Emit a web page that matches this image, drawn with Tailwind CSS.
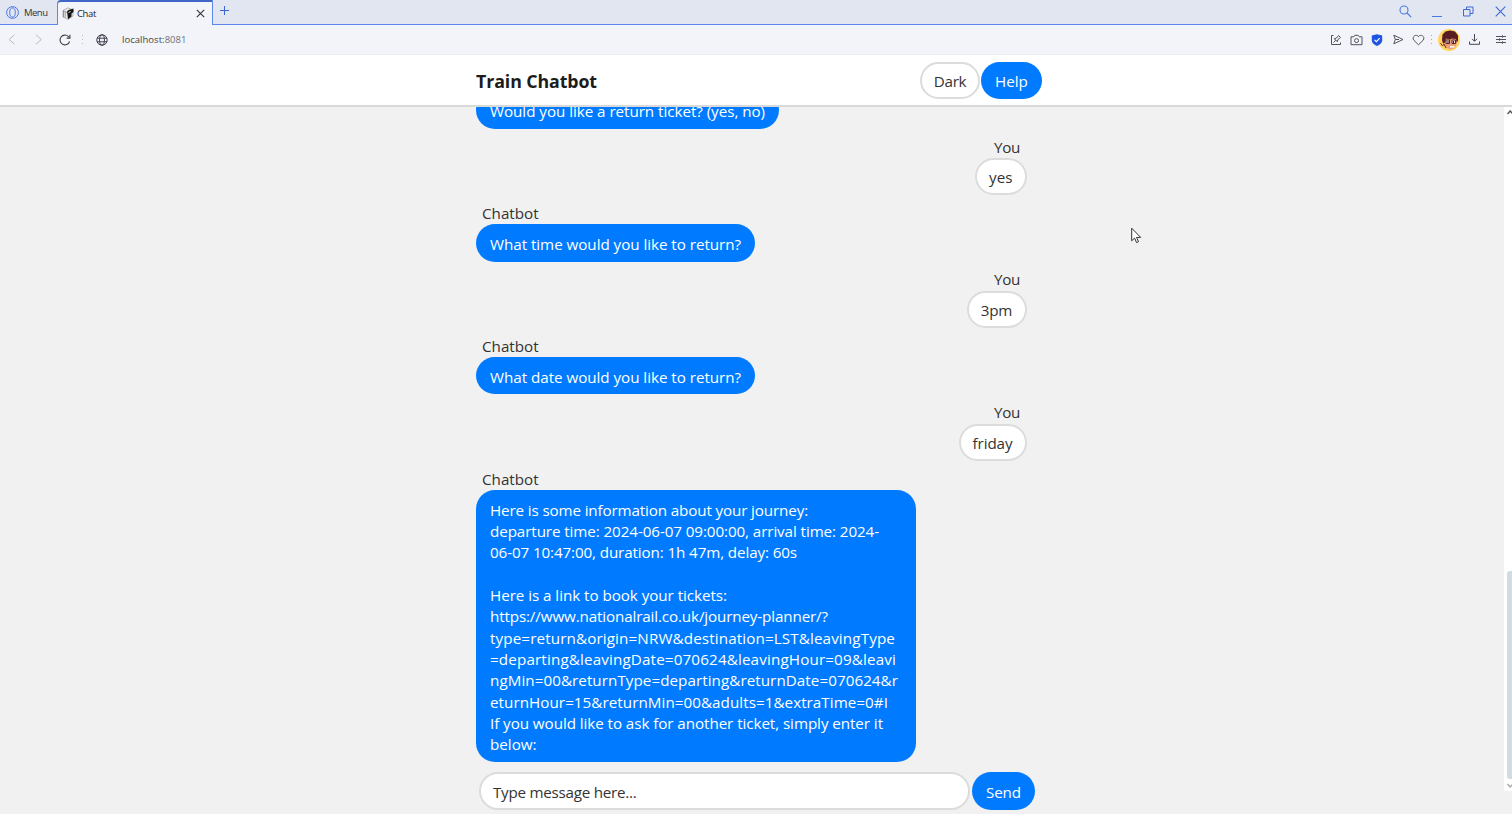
<!DOCTYPE html>
<html lang="en">
<head>
<meta charset="utf-8">
<title>Chat</title>
<script src="https://cdn.jsdelivr.net/npm/@tailwindcss/browser@4"></script>
</head>
<body class="w-[1512px] h-[814px] overflow-hidden bg-[#f1f1f1] font-['Open_Sans','Noto_Sans',sans-serif] text-[15.2px] leading-[21.33px] text-[#333]">
<div class="relative flex h-[814px] flex-col">
  <!-- Tab strip -->
  <div class="flex h-[25px] shrink-0 bg-[#e2e6f0] text-[9.5px] leading-none">
    <div class="flex w-[57px] items-center border-b border-[#5c86ee] pl-[6px] pt-px">
      <svg class="mr-[5px] h-[13px] w-[13px] shrink-0" viewBox="0 0 13 13" fill="none" stroke="#4a76e8"><circle cx="6.5" cy="6.5" r="5.9"/><ellipse cx="6.5" cy="6.5" rx="2.8" ry="4.6"/></svg>
      <span class="whitespace-nowrap pt-px tracking-[-0.508px]">Menu</span>
    </div>
    <div class="flex w-[156px] items-center rounded-tl-[4px] border-x border-t-2 border-x-[#5c86ee] border-t-[#3f66c8] bg-[#f3f4f9] pl-[4px]">
      <svg class="mr-[3px] h-[13px] w-[12px]" viewBox="0 0 12 13"><path d="M1 3.5 6 .8 11 3v6L6 12.3 1 10z" fill="#ececef" stroke="#999" stroke-width=".7"/><path d="M5 4.500 6.500 3 11.500 1.500V5L9.500 6.500V9.500L6 12.300 5.500 8z" fill="#151515"/><path d="M6.500 5.500 8.500 4.500" stroke="#eee"/><path d="M1.500 4v6M3.200 5v5.500M1 3.500l4 2" stroke="#777" stroke-width=".7"/></svg>
      <span class="whitespace-nowrap tracking-[-0.371px] text-[#222]">Chat</span>
      <svg class="ml-auto mr-[7px] h-[9px] w-[9px]" viewBox="0 0 9 9" stroke="#333" stroke-width="1.1"><path d="M.8.8l7.400 7.400M8.200.8.8 8.200"/></svg>
    </div>
    <div class="flex flex-1 border-b border-[#5c86ee] pl-[7px] pt-[6px]">
      <svg class="h-[9px] w-[9px]" viewBox="0 0 9 9" stroke="#3b64d0"><path d="M4.5 0v9M0 4.5h9"/></svg>
      <div class="ml-auto flex pr-[6px]">
        <svg class="-mt-[1px] mr-[20px] h-[13px] w-[13px] translate-x-px" viewBox="0 0 13 13" fill="none" stroke="#4a78e6" stroke-width="1.1"><circle cx="5" cy="5" r="4"/><path d="m8 8 4.200 4.200"/></svg>
        <svg class="mr-[22px] h-[12px] w-[10px] translate-x-px" viewBox="0 0 10 12" stroke="#4a78e6"><path d="M0 10.500h10"/></svg>
        <svg class="mr-[21px] h-[11px] w-[11px]" viewBox="0 0 11 11" fill="none" stroke="#3f68d4"><path d="M.5 3.500h6.500v6.500H.5zM3.500 3.500v-2.500h6.500v6.500H7"/></svg>
        <svg class="h-[11px] w-[11px]" viewBox="0 0 11 11" stroke="#3f68d4" stroke-width="1.1"><path d="m.7.7 9.600 9.600M10.300.7.7 10.300"/></svg>
      </div>
    </div>
  </div>
  <!-- Address bar -->
  <div class="flex h-[30px] shrink-0 items-center border-b border-[#eceef2] bg-[#f3f4f9] text-[9.5px] leading-none">
    <svg class="ml-[8px] h-[11px] w-[8px]" viewBox="0 0 8 11" fill="none" stroke="#b5b8c0"><path d="M6.500.8 1.200 5.500l5.300 4.700"/></svg>
    <svg class="ml-[19px] h-[11px] w-[8px]" viewBox="0 0 8 11" fill="none" stroke="#b5b8c0"><path d="m1 .8 5.300 4.700L1 10.200"/></svg>
    <svg class="ml-[16px] h-[12px] w-[12px]" viewBox="0 0 12 12" fill="none" stroke="#3c3e4c" stroke-width="1.1"><path d="M10.600 7.500A4.900 4.900 0 1 1 9.500 2.600l1 1"/><path d="M10.900.8v3.300H7.600"/></svg>
    <svg class="ml-[10px] h-[9px] w-[3px]" viewBox="0 0 3 9" fill="#b5b8c0"><path d="M1 0h1v1H1zM1 4h1v1H1zM1 8h1v1H1z"/></svg>
    <svg class="ml-[12px] h-[12px] w-[12px]" viewBox="0 0 12 12" fill="none" stroke="#3c3e4c"><circle cx="6" cy="6" r="5.200"/><ellipse cx="6" cy="6" rx="2.400" ry="5.200"/><path d="M1 4.200h10M1 7.800h10"/></svg>
    <span class="ml-[14px] whitespace-nowrap pt-px tracking-[0.033px] text-[#444]">localhost:<span class="text-[#6d6f78]">8081</span></span>
    <div class="ml-auto flex items-center pr-[6px]">
      <div class="flex translate-x-px items-center">
      <svg class="h-[12px] w-[12px]" viewBox="0 0 12 12" fill="none" stroke="#50525f"><path d="M3.500 1.500h-2v9h9V8.500M3.500 8.500l2.300-2.300M4.300 4.700l3 3 .5-2 2.700-2.200L8.500 1.500 6.300 4.200z"/></svg>
      <svg class="ml-[8px] h-[12px] w-[13px]" viewBox="0 0 13 12" fill="none" stroke="#50525f"><path d="M1 2.800h2.800l1-1.500h3.400l1 1.500H12v7.900H1z"/><circle cx="6.500" cy="6.600" r="2"/></svg>
      <svg class="ml-[8px] h-[12px] w-[12px]" viewBox="0 0 12 12"><path d="M.8 1.600 6 .2l5.200 1.400v4.600C11.200 9 8.800 10.800 6 12 3.200 10.800.8 9 .8 6.200z" fill="#1f55e0"/><path d="m3.500 5.800 1.900 1.900 3.300-3.500" fill="none" stroke="#fff" stroke-width="1.100"/></svg>
      <svg class="ml-[10px] h-[11px] w-[11px]" viewBox="0 0 11 11" fill="none" stroke="#50525f"><path d="M.8 1.200 10 5.500.8 9.800 2.300 5.500zM2.300 5.500H6"/></svg>
      <svg class="ml-[8px] h-[12px] w-[13px]" viewBox="0 0 13 12" fill="none" stroke="#50525f"><path d="M6.500 10.800 1.900 6.300C-.6 3.500 3.400-.8 6.500 2.600 9.600-.8 13.600 3.500 11.100 6.300z"/></svg>
      </div>
      <svg class="ml-[6px] h-[9px] w-[3px]" viewBox="0 0 3 9" fill="#a5a8b0"><path d="M1 0h1v1H1zM1 4h1v1H1zM1 8h1v1H1z"/></svg>
      <svg class="ml-[5px] h-[22px] w-[22px]" viewBox="0 0 22 22"><circle cx="11" cy="11" r="11" fill="#ffd35c"/><path d="M5 9h13l1.500 4-2.500 6-5 1.500-6-3z" fill="#e9a078"/><path d="M4 11 4.500 5.500l3-3 4.500-1 5 1 3 4v5l-1.500 2L18 10l-4-.5-2 1-4-1-1 4-2 1z" fill="#571c22"/><path d="M8 11h3.500v3.500H8zM14 11h3.500v3.500H14z" fill="#f6dfd4" stroke="#602227"/><path d="M9.500 12h1v2h-1zM15 12h1v2h-1z" fill="#222"/><path d="M12 17.800h4.500" stroke="#fff" stroke-width="1.500"/><path d="m2.500 14 2 3 1.500-2 2 4" stroke="#7b372c" fill="none"/></svg>
      <svg class="ml-[9px] h-[11px] w-[11px]" viewBox="0 0 11 11" fill="none" stroke="#454754"><path d="M5.500 0v7M3 4.800l2.500 2.500L8 4.800M.5 7.500v2.800h10V7.500"/></svg>
      <svg class="ml-[16px] h-[10px] w-[10px]" viewBox="0 0 10 10" fill="none" stroke="#50525f"><path d="M0 1.500h10M0 4.500h10M0 7.500h10M6.500.3v2.400M3.500 3.300v2.400M6.500 6.300v2.400"/></svg>
    </div>
  </div>
  <!-- Page header -->
  <header class="flex h-[52px] shrink-0 items-center border-b-2 border-[#d9d9d9] bg-white pl-[476px]">
    <h1 class="mt-[4px] w-[444px] whitespace-nowrap text-[17.800px] font-bold tracking-[-0.101px] text-[#1c1c1c]">Train Chatbot</h1>
    <button class="flex h-[37px] w-[60px] items-center justify-center rounded-full border-2 border-[#dcdcdc] bg-white pt-[3px] tracking-[-0.289px]">Dark</button>
    <button class="ml-px flex h-[37px] w-[61px] items-center justify-center rounded-full bg-[#007bff] pt-[3px] text-white">Help</button>
  </header>
  <div class="flex h-[684px] shrink-0">
    <!-- Messages -->
    <main class="flex h-[655px] w-[1504px] flex-col justify-end gap-[7.800px] overflow-hidden pl-[476px]">
      <div class="shrink-0"><p class="flex h-[37.300px] w-[303px] items-center whitespace-nowrap rounded-[19px] bg-[#007bff] pl-[14px] pt-[3px] tracking-[-0.039px] text-white">Would you like a return ticket? (yes, no)</p></div>
      <div class="flex w-[550.500px] shrink-0 flex-col items-end"><p class="pr-[6.500px] tracking-[-0.318px]">You</p><p class="flex h-[37.300px] w-[51.500px] items-center justify-center rounded-[19px] border-2 border-[#dcdcdc] bg-white pt-[3px]">yes</p></div>
      <div class="shrink-0"><p class="pl-[6px]">Chatbot</p><p class="flex h-[37.300px] w-[279px] items-center whitespace-nowrap rounded-[19px] bg-[#007bff] pl-[14px] pt-[3px] tracking-[-0.039px] text-white">What time would you like to return?</p></div>
      <div class="flex w-[550.500px] shrink-0 flex-col items-end"><p class="pr-[6.500px] tracking-[-0.318px]">You</p><p class="flex h-[37.300px] w-[60px] items-center justify-center rounded-[19px] border-2 border-[#dcdcdc] bg-white pt-[3px] tracking-[-0.182px]">3pm</p></div>
      <div class="shrink-0"><p class="pl-[6px]">Chatbot</p><p class="flex h-[37.300px] w-[279px] items-center whitespace-nowrap rounded-[19px] bg-[#007bff] pl-[14px] pt-[3px] tracking-[-0.034px] text-white">What date would you like to return?</p></div>
      <div class="flex w-[550.500px] shrink-0 flex-col items-end"><p class="pr-[6.500px] tracking-[-0.318px]">You</p><p class="flex h-[37.300px] w-[68px] items-center justify-center rounded-[19px] border-2 border-[#dcdcdc] bg-white pt-[3px] tracking-[-0.083px]">friday</p></div>
      <div class="shrink-0"><p class="pl-[6px]">Chatbot</p>
        <p class="flex h-[272px] w-[440px] flex-col items-start whitespace-nowrap rounded-[19px] bg-[#007bff] pl-[14px] pt-[9.600px] text-white">
          <span class="tracking-[-0.131px]">Here is some information about your journey:</span>
          <span class="tracking-[-0.089px]">departure time: 2024-06-07 09:00:00, arrival time: 2024-</span>
          <span class="tracking-[-0.112px]">06-07 10:47:00, duration: 1h 47m, delay: 60s</span>
          <span class="mt-[21.330px] tracking-[-0.044px]">Here is a link to book your tickets:</span>
          <span class="tracking-[-0.131px]">https://www.nationalrail.co.uk/journey-planner/?</span>
          <span class="tracking-[0.131px]">type=return&amp;origin=NRW&amp;destination=LST&amp;leavingType</span>
          <span class="tracking-[0.153px]">=departing&amp;leavingDate=070624&amp;leavingHour=09&amp;leavi</span>
          <span class="tracking-[0.061px]">ngMin=00&amp;returnType=departing&amp;returnDate=070624&amp;r</span>
          <span class="tracking-[0.055px]">eturnHour=15&amp;returnMin=00&amp;adults=1&amp;extraTime=0#I</span>
          <span class="tracking-[-0.064px]">If you would like to ask for another ticket, simply enter it</span>
          <span>below:</span>
        </p></div>
    </main>
    <!-- Scrollbar -->
    <div class="flex w-[8px] flex-col justify-between overflow-hidden bg-white pb-[3px] pl-[3px] pt-[3px]">
      <svg class="h-[5px] w-[6px]" viewBox="0 0 6 5" fill="none" stroke="#555" stroke-width="1.500"><path d="m.5 4 2.700-3 2.700 3"/></svg>
      <div class="flex flex-col gap-[4px]"><div class="h-[208px] w-[5px] rounded-l-[3px] bg-[#d0dbe2]"></div>
      <svg class="h-[5px] w-[6px]" viewBox="0 0 6 5" fill="none" stroke="#aaa" stroke-width="1.500"><path d="m.5 1 2.700 3 2.700-3"/></svg></div>
    </div>
  </div>
  <!-- Composer, floating over the end of the chat -->
  <form class="absolute left-[479px] top-[772px] flex gap-[2px]">
    <div class="flex h-[38px] w-[491px] items-center whitespace-nowrap rounded-full border-2 border-[#dcdcdc] bg-white pl-[12px] pt-[3px] tracking-[-0.251px]">Type message here...</div>
    <div class="flex h-[38px] w-[63px] items-center justify-center rounded-full bg-[#007bff] pt-[3px] tracking-[-0.117px] text-white">Send</div>
  </form>
  <!-- Mouse pointer -->
  <svg class="absolute left-[1131px] top-[227px] h-[17px] w-[11px]" viewBox="0 0 11 17" fill="#fff" stroke="#333"><path d="M.7 1.200v12.600l2.900-2.700 2 4.500 1.900-.9-2-4.300h4.200z"/></svg>
</div>
</body>
</html>
